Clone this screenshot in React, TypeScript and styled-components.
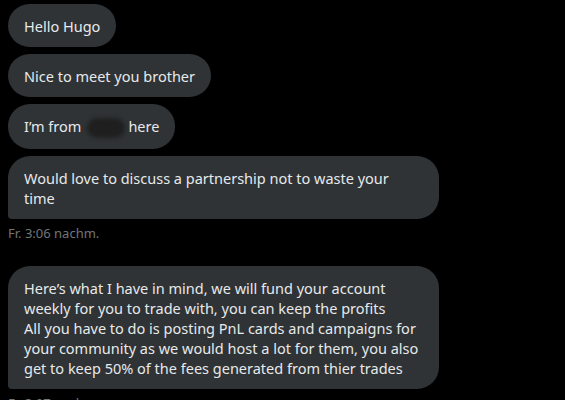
import styled, { createGlobalStyle } from "styled-components";

const GlobalStyle = createGlobalStyle`
	html, body {
		margin: 0;
		background: #000;
	}
	body {
		font-family: "Noto Sans", "Open Sans", sans-serif;
	}
`;

const Thread = styled.div`
	display: flex;
	flex-direction: column;
	align-items: flex-start;
	padding: 4px 8px;
	gap: 7px;
	height: 400px;
	box-sizing: border-box;
	overflow: hidden;
`;

const Bubble = styled.div<{ $wide?: boolean; $last?: boolean }>`
	box-sizing: border-box;
	width: ${(p) => (p.$wide ? "431px" : "auto")};
	padding: 11.5px 16px;
	background: #2f3336;
	color: #e7e9ea;
	font-size: 14.5px;
	line-height: 20px;
	border-radius: 22px;
	border-bottom-left-radius: ${(p) => (p.$last ? "4px" : "22px")};
	white-space: nowrap;
`;

const Redacted = styled.span`
	display: inline-block;
	width: 38px;
	height: 20px;
	margin: 0 3px 0 6px;
	vertical-align: middle;
	background: #1f1f1f;
	border-radius: 12px;
	filter: blur(2px);
`;

const Stamp = styled.div<{ $gapBelow?: number }>`
	font-size: 13px;
	line-height: 16px;
	color: #71767b;
	margin-top: -1px;
	margin-bottom: ${(p) => p.$gapBelow ?? 0}px;
`;

export default function App() {
	return (
		<>
			<GlobalStyle />
			<Thread>
				<Bubble>Hello Hugo</Bubble>
				<Bubble>Nice to meet you brother</Bubble>
				<Bubble>
					I’m from<Redacted />here
				</Bubble>
				<Bubble $wide $last>
					Would love to discuss a partnership not to waste your
					<br />
					time
				</Bubble>
				<Stamp $gapBelow={18}>Fr. 3:06 nachm.</Stamp>
				<Bubble $wide $last>
					Here’s what I have in mind, we will fund your account
					<br />
					weekly for you to trade with, you can keep the profits
					<br />
					All you have to do is posting PnL cards and campaigns for
					<br />
					your community as we would host a lot for them, you also
					<br />
					get to keep 50% of the fees generated from thier trades
				</Bubble>
				<Stamp>Fr. 3:07 nachm.</Stamp>
			</Thread>
		</>
	);
}
